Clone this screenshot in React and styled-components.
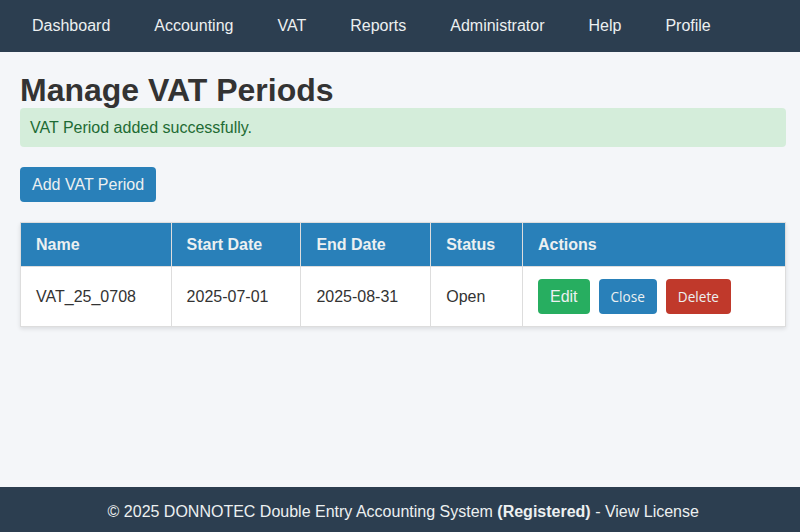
import React from "react";
import styled, { createGlobalStyle } from "styled-components";

const GlobalStyle = createGlobalStyle`
  html, body {
    margin: 0;
    padding: 0;
    height: 100%;
  }
  body {
    background-color: #f4f6f9;
    color: #333;
    font-family: "Liberation Sans", Arial, sans-serif;
    font-size: 16px;
  }
  * {
    box-sizing: border-box;
  }
`;

const Page = styled.div`
  height: 532px;
  display: flex;
  flex-direction: column;
  overflow: hidden;
`;

const Nav = styled.nav`
  height: 52px;
  background-color: #2c3e50;
  display: flex;
  align-items: center;
  padding-left: 32px;
  gap: 44px;
`;

const NavLink = styled.a`
  color: #ecf0f1;
  font-size: 16px;
  text-decoration: none;
  cursor: pointer;
`;

const Main = styled.main`
  flex: 1;
  padding: 20px 14px 0 20px;
`;

const Title = styled.h1`
  margin: 0;
  font-size: 32px;
  line-height: 36px;
  font-weight: 700;
  color: #333;
`;

const Alert = styled.div`
  height: 39px;
  padding: 10px;
  line-height: 19px;
  background-color: #d4edda;
  color: #1e6b34;
  border-radius: 4px;
  margin-bottom: 20px;
`;

const Button = styled.button`
  border: none;
  border-radius: 4px;
  color: #ecf0f1;
  background-color: ${(p) => p.$bg || "#2980b9"};
  cursor: pointer;
  height: 35px;
  padding: 0 12px;
  font-family: "Liberation Sans", Arial, sans-serif;
  font-size: 16px;
`;

const SmallButton = styled(Button)`
  font-family: "Open Sans", sans-serif;
  font-size: 13.6px;
`;

const Table = styled.table`
  width: 766px;
  margin-top: 20px;
  border-collapse: collapse;
  background-color: #fff;
  box-shadow: 0 2px 4px rgba(0, 0, 0, 0.1);
  border: 1px solid #ddd;
  table-layout: fixed;
`;

const Th = styled.th`
  height: 44px;
  padding: 0 15px;
  text-align: left;
  font-weight: 700;
  color: #ecf0f1;
  background-color: #2980b9;
  border: 1px solid #ddd;
  width: ${(p) => p.$w};
`;

const Td = styled.td`
  height: 60px;
  padding: 0 15px;
  color: #333;
  border: 1px solid #ddd;
`;

const Actions = styled.div`
  display: flex;
  align-items: center;
  gap: 9px;
`;

const Footer = styled.footer`
  height: 45px;
  padding: 4px 0 0 6.5px;
  background-color: #2c3e50;
  color: #ecf0f1;
  display: flex;
  align-items: center;
  justify-content: center;
`;

const LicenseLink = styled.a`
  color: inherit;
  text-decoration: none;
  cursor: pointer;
`;

const links = ["Dashboard", "Accounting", "VAT", "Reports", "Administrator", "Help", "Profile"];

const App = () => {
  return (
    <Page>
      <GlobalStyle />
      <Nav>
        {links.map((l) => (
          <NavLink key={l}>{l}</NavLink>
        ))}
      </Nav>
      <Main>
        <Title>Manage VAT Periods</Title>
        <Alert>VAT Period added successfully.</Alert>
        <Button>Add VAT Period</Button>
        <Table>
          <thead>
            <tr>
              <Th $w="150.6px">Name</Th>
              <Th $w="129.8px">Start Date</Th>
              <Th $w="129.8px">End Date</Th>
              <Th $w="91.8px">Status</Th>
              <Th>Actions</Th>
            </tr>
          </thead>
          <tbody>
            <tr>
              <Td>VAT_25_0708</Td>
              <Td>2025-07-01</Td>
              <Td>2025-08-31</Td>
              <Td>Open</Td>
              <Td>
                <Actions>
                  <Button $bg="#27ae60">Edit</Button>
                  <SmallButton>Close</SmallButton>
                  <SmallButton $bg="#c0392b">Delete</SmallButton>
                </Actions>
              </Td>
            </tr>
          </tbody>
        </Table>
      </Main>
      <Footer>
        <span>
          © 2025 DONNOTEC Double Entry Accounting System <b>(Registered)</b> -{" "}
          <LicenseLink>View License</LicenseLink>
        </span>
      </Footer>
    </Page>
  );
};

export default App;
